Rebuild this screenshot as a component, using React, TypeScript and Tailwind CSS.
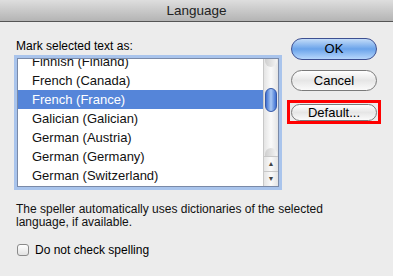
import React, { useState } from 'react';

const LANGUAGES = [
  'Finnish (Finland)',
  'French (Canada)',
  'French (France)',
  'Galician (Galician)',
  'German (Austria)',
  'German (Germany)',
  'German (Switzerland)',
];

const FONT = "font-['Liberation_Sans',Arial,sans-serif]";

const App: React.FC = () => {
  const [selected, setSelected] = useState('French (France)');
  const [noCheck, setNoCheck] = useState(false);

  return (
    <div className={`w-[393px] h-[276px] bg-[#ececec] text-black overflow-hidden ${FONT}`}>
      {/* Title bar */}
      <div className="h-[22px] border-b border-[#555] bg-gradient-to-b from-[#dedede] to-[#b4b4b4] text-center text-[13.5px] leading-[21px] text-[#222]">
        Language
      </div>

      <div className="pl-[16px]">
        <div className="flex">
          {/* Left column */}
          <div className="w-[263px]">
            <p className="mt-[17px] text-[12px] leading-[14px]">Mark selected text as:</p>

            {/* List box */}
            <div className="mt-[5px] ml-[1px] h-[129px] border border-[#7a8aa8] bg-white shadow-[0_0_0_3px_#a9c4ec] flex overflow-hidden">
              <div className="flex-1 overflow-hidden">
                <div className="-mt-[7px]">
                  {LANGUAGES.map(lang => (
                    <div
                      key={lang}
                      onClick={() => setSelected(lang)}
                      className={`h-[19px] pl-[14px] text-[13px] leading-[19px] ${
                        selected === lang ? 'bg-[#5585d9] text-white' : 'text-[#111]'
                      }`}
                    >
                      {lang}
                    </div>
                  ))}
                </div>
              </div>

              {/* Scrollbar */}
              <div className="w-[15px] border-l border-[#c8c8c8] bg-gradient-to-r from-[#e4e4e4] via-[#fafafa] to-[#e4e4e4] flex flex-col">
                <div className="flex-1 relative">
                  <div className="absolute left-[1px] right-[1px] top-0 h-[8px] rounded-b-full bg-gradient-to-r from-[#cfcfcf] to-[#f4f4f4]" />
                  <div className="absolute left-[1px] right-[1px] top-[29px] h-[24px] rounded-full border border-[#3659a8] bg-gradient-to-r from-[#3f6fd0] via-[#a9c8f4] to-[#3f6fd0]" />
                  <div className="absolute left-[1px] right-[1px] bottom-0 h-[8px] rounded-t-full bg-gradient-to-r from-[#cfcfcf] to-[#f4f4f4]" />
                </div>
                <div className="h-[15px] border-t border-[#c8c8c8] flex items-center justify-center text-[7px] text-[#444]">▲</div>
                <div className="h-[15px] border-t border-[#c8c8c8] flex items-center justify-center text-[7px] text-[#444]">▼</div>
              </div>
            </div>
          </div>

          {/* Right column: buttons */}
          <div className="ml-[8px] flex flex-col">
            <button className="mt-[16px] ml-[4px] w-[86px] h-[22px] rounded-full border border-[#3d4f91] bg-gradient-to-b from-[#c3dcf8] via-[#6aa3ea] to-[#b6d6fb] text-[13px] leading-[20px] text-black">
              OK
            </button>
            <button className="mt-[10px] ml-[4px] w-[86px] h-[21px] rounded-full border border-[#7a7a7a] bg-gradient-to-b from-white via-[#e6e6e6] to-[#fafafa] text-[13px] leading-[19px] text-black">
              Cancel
            </button>
            <div className="mt-[9px] w-[94px] h-[24px] border-[3px] border-[#ff0000] flex items-center justify-center">
              <button className="w-[86px] h-[17px] rounded-full border border-[#7a7a7a] bg-gradient-to-b from-white via-[#e6e6e6] to-[#fafafa] text-[13px] leading-[15px] text-black">
                Default...
              </button>
            </div>
          </div>
        </div>

        <p className="mt-[16px] w-[330px] text-[12px] leading-[13px] text-[#111]">
          The speller automatically uses dictionaries of the selected language, if available.
        </p>

        <label className="mt-[14px] flex items-center gap-[6px] text-[12px] leading-[14px] ml-[1px]">
          <input
            type="checkbox"
            checked={noCheck}
            onChange={() => setNoCheck(!noCheck)}
            className="appearance-none w-[12px] h-[12px] rounded-[3px] border border-[#8a8a8a] bg-gradient-to-b from-white to-[#e2e2e2] m-0"
          />
          Do not check spelling
        </label>
      </div>
    </div>
  );
};

export default App;
